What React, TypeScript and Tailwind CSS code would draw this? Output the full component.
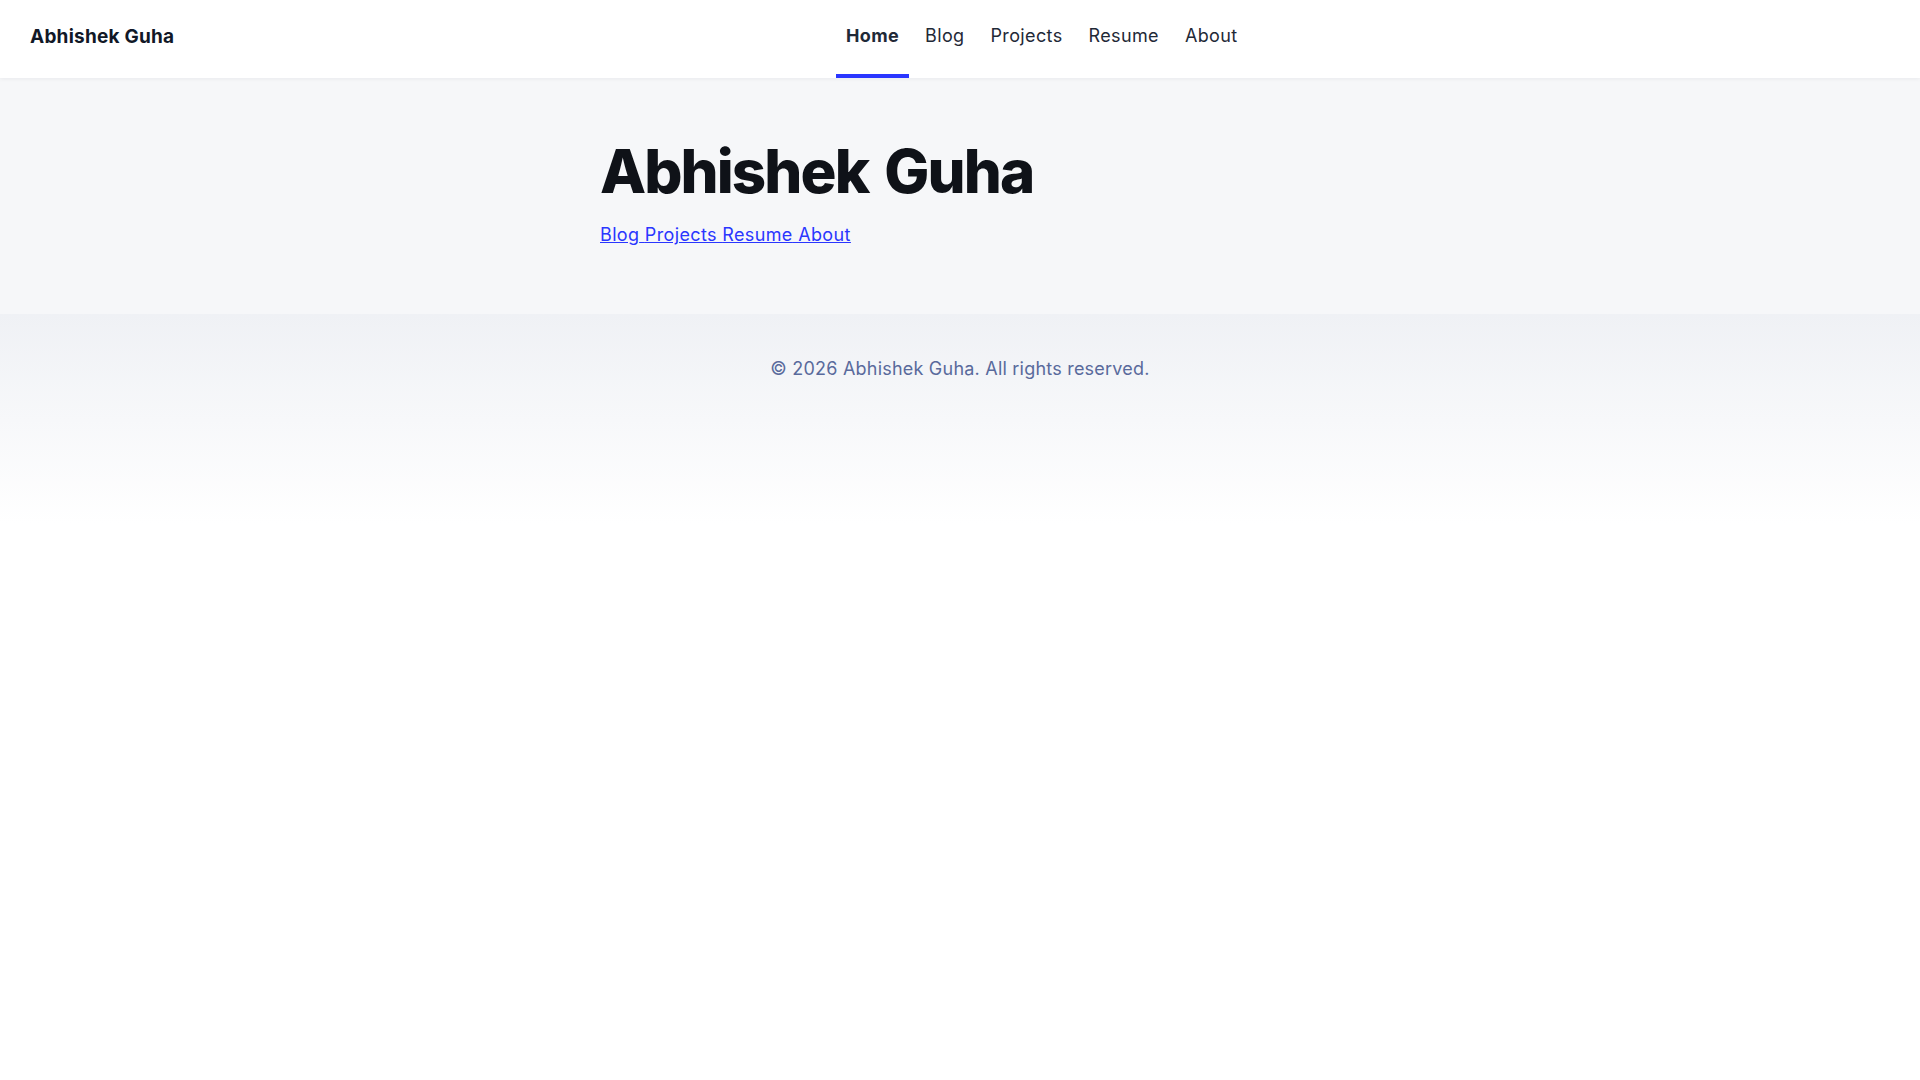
export default function App() {
    const navItems = ['Home', 'Blog', 'Projects', 'Resume', 'About'];

    return (
        <div className="min-h-screen bg-white font-['Inter','Noto_Sans',sans-serif] text-[#111827]">
            <header className="relative z-10 flex h-[78px] items-stretch bg-white px-[30px] shadow-[0_1px_4px_rgba(15,23,42,0.06)]">
                <div className="flex w-[806px] shrink-0 items-center pb-[3px]">
                    <a href="#" className="text-[19px] font-bold tracking-[0.012em] text-[#111827]">
                        Abhishek Guha
                    </a>
                </div>
                <nav className="flex items-stretch gap-[6px]">
                    {navItems.map((item) => (
                        <a
                            key={item}
                            href="#"
                            className={
                                item === 'Home'
                                    ? 'flex items-center border-b-4 border-[#2a36ff] px-[10px] pb-[4px] text-[18px] font-bold tracking-[0.02em] text-[#1f2937]'
                                    : 'flex items-center border-b-4 border-transparent px-[10px] pb-[4px] text-[18px] tracking-[0.02em] text-[#1f2937]'
                            }
                        >
                            {item}
                        </a>
                    ))}
                </nav>
            </header>

            <main className="bg-[#f6f7f9]">
                <div className="mx-auto max-w-3xl px-6 pt-[60px] pb-[60px]">
                    <h1 className="text-[60px] leading-[66px] font-extrabold tracking-[-0.032em] [word-spacing:0.08em] text-[#0f1218]">
                        Abhishek Guha
                    </h1>
                    <div className="mt-[17px] mb-[5px] text-[18px] leading-7 tracking-[0.02em] text-[#2a36ff] underline">
                        <a href="#">Blog</a> <a href="#">Projects</a> <a href="#">Resume</a> <a href="#">About</a>
                    </div>
                </div>
            </main>

            <footer className="h-[210px] bg-linear-to-b from-[#eff1f5] to-white pt-[41px] text-center">
                <p className="text-[18px] leading-7 tracking-[0.012em] text-[#596a9c]">© 2026 Abhishek Guha. All rights reserved.</p>
            </footer>
        </div>
    );
}
